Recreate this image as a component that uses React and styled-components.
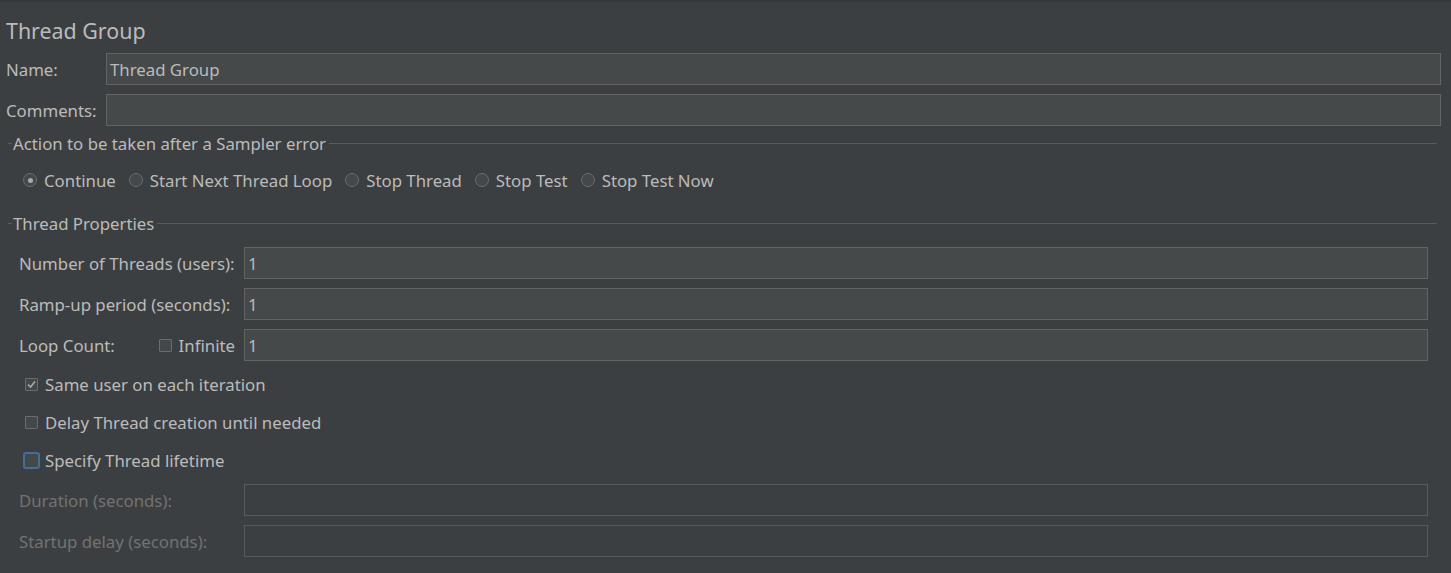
import React from 'react'
import styled, { createGlobalStyle } from 'styled-components'

const GlobalStyle = createGlobalStyle`
  html, body {
    margin: 0;
    padding: 0;
    background: #3c3f41;
  }
  body {
    font-family: "Noto Sans", "Open Sans", "DejaVu Sans", sans-serif;
    font-size: 16.8px;
    color: #bbbbbb;
  }
`

const Panel = styled.div`
  box-sizing: border-box;
  height: 573px;
  background: #3c3f41;
  border-top: 2px solid #35383a;
  display: flex;
  flex-direction: column;
`

const Title = styled.div`
  font-size: 21.4px;
  line-height: 28px;
  padding-left: 6px;
  margin-top: 15px;
  color: #bbbbbb;
`

const FieldRow = styled.div`
  display: flex;
  align-items: center;
  padding: 0 10px 0 6px;
  margin-top: ${p => p.$top || 0}px;
`

const Label = styled.span`
  width: ${p => p.$width}px;
  flex-shrink: 0;
  white-space: nowrap;
  color: ${p => (p.$disabled ? '#727272' : '#bbbbbb')};
`

const Field = styled.div`
  box-sizing: border-box;
  flex: 1;
  height: 32px;
  padding: 0 3px;
  display: flex;
  align-items: center;
  background: ${p => (p.$disabled ? '#3c3f41' : '#45494a')};
  border: 1px solid ${p => (p.$disabled ? '#57595b' : '#646464')};
  color: #bbbbbb;
`

const SectionTitle = styled.div`
  display: flex;
  align-items: center;
  margin: ${p => p.$top}px 14px 0 8px;
  &::before {
    content: '';
    width: 4px;
    border-top: 1px solid #585b5d;
    margin-right: 1px;
  }
  &::after {
    content: '';
    flex: 1;
    border-top: 1px solid #585b5d;
    margin-left: 3px;
  }
`

const RadioRow = styled.div`
  display: flex;
  align-items: center;
  gap: 13px;
  padding-left: 23px;
  margin-top: 13px;
  height: 24px;
`

const RadioItem = styled.label`
  display: flex;
  align-items: center;
  gap: 7px;
  white-space: nowrap;
`

const RadioDot = styled.span`
  box-sizing: border-box;
  width: 14px;
  height: 14px;
  border-radius: 50%;
  border: 1px solid #6b6b6b;
  background: #43494a;
  display: flex;
  align-items: center;
  justify-content: center;
  &::after {
    content: '';
    display: ${p => (p.$on ? 'block' : 'none')};
    width: 5px;
    height: 5px;
    border-radius: 50%;
    background: #a9a9a9;
  }
`

const PropRow = styled.div`
  display: flex;
  align-items: center;
  padding: 0 23px 0 19px;
  margin-top: ${p => p.$top}px;
`

const LoopLabel = styled.div`
  width: 225px;
  flex-shrink: 0;
  display: flex;
  align-items: center;
`

const Infinite = styled.label`
  margin-left: auto;
  margin-right: 9px;
  display: flex;
  align-items: center;
  gap: 7px;
`

const CheckRow = styled.label`
  display: flex;
  align-items: center;
  gap: 7px;
  padding-left: ${p => (p.$focus ? 23 : 25)}px;
  margin-top: ${p => p.$top}px;
  height: 24px;
`

const Box = styled.span`
  box-sizing: border-box;
  width: ${p => (p.$focus ? 17 : 13)}px;
  height: ${p => (p.$focus ? 17 : 13)}px;
  border-radius: ${p => (p.$focus ? 3 : 1)}px;
  border: ${p => (p.$focus ? '2px solid #466d94' : '1px solid #6b6b6b')};
  background: #43494a;
  display: flex;
  align-items: center;
  justify-content: center;
  margin-right: ${p => (p.$focus ? -2 : 0)}px;
  flex-shrink: 0;
`

const Check = () => (
  <svg width="11" height="11" viewBox="0 0 11 11">
    <path d="M2 5.5 L4.5 8 L9 2.5" fill="none" stroke="#a9a9a9" strokeWidth="1.6" />
  </svg>
)

const actions = ['Continue', 'Start Next Thread Loop', 'Stop Thread', 'Stop Test', 'Stop Test Now']

export default function App() {
  return (
    <>
      <GlobalStyle />
      <Panel>
        <Title>Thread Group</Title>
        <FieldRow $top={8}>
          <Label $width={100}>Name:</Label>
          <Field>Thread Group</Field>
        </FieldRow>
        <FieldRow $top={9}>
          <Label $width={100}>Comments:</Label>
          <Field />
        </FieldRow>

        <SectionTitle $top={6}>Action to be taken after a Sampler error</SectionTitle>
        <RadioRow>
          {actions.map((a, i) => (
            <RadioItem key={a}>
              <RadioDot $on={i === 0} />
              {a}
            </RadioItem>
          ))}
        </RadioRow>

        <SectionTitle $top={20}>Thread Properties</SectionTitle>
        <PropRow $top={12}>
          <Label $width={225}>Number of Threads (users):</Label>
          <Field>1</Field>
        </PropRow>
        <PropRow $top={9}>
          <Label $width={225}>Ramp-up period (seconds):</Label>
          <Field>1</Field>
        </PropRow>
        <PropRow $top={9}>
          <LoopLabel>
            Loop Count:
            <Infinite>
              <Box />
              Infinite
            </Infinite>
          </LoopLabel>
          <Field>1</Field>
        </PropRow>

        <CheckRow $top={11}>
          <Box><Check /></Box>
          Same user on each iteration
        </CheckRow>
        <CheckRow $top={14}>
          <Box />
          Delay Thread creation until needed
        </CheckRow>
        <CheckRow $top={14} $focus>
          <Box $focus />
          Specify Thread lifetime
        </CheckRow>

        <PropRow $top={12}>
          <Label $width={225} $disabled>Duration (seconds):</Label>
          <Field $disabled />
        </PropRow>
        <PropRow $top={9}>
          <Label $width={225} $disabled>Startup delay (seconds):</Label>
          <Field $disabled />
        </PropRow>
      </Panel>
    </>
  )
}
